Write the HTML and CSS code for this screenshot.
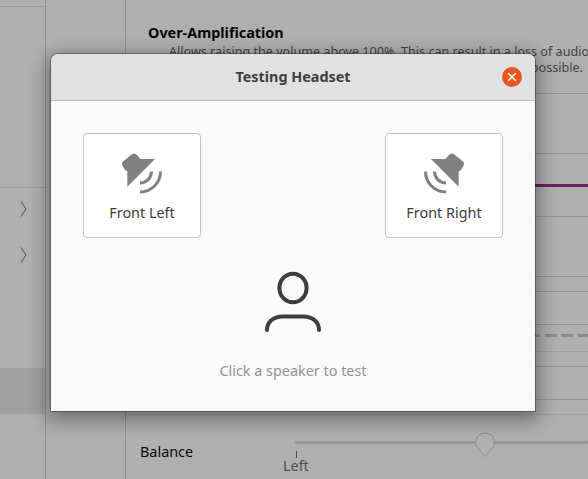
FILE: index.html
```html
<!DOCTYPE html>
<html lang="en">

<head>
    <meta charset="UTF-8" />
    <title>Testing Headset</title>
    <link rel="stylesheet" href="styles.css">
</head>

<body>
    <div class="window">
        <div class="categories">
            <div class="cat-top"></div>
            <div class="cat-chevrons">
                <svg class="chevron" width="7" height="18" viewBox="0 0 7 18"><path d="M1 1.5 L6 9 L1 16.5" /></svg>
                <svg class="chevron" width="7" height="18" viewBox="0 0 7 18"><path d="M1 1.5 L6 9 L1 16.5" /></svg>
            </div>
            <div class="cat-selected"></div>
        </div>
        <div class="nav"></div>
        <div class="content">
            <div class="amplification">
                <div class="amp-title">Over-Amplification</div>
                <div class="amp-text">Allows raising the volume above 100%. This can result in a loss of audio</div>
                <div class="amp-text amp-second">quality; it is better to increase the application volume if possible.</div>
            </div>
            <div class="rows">
                <div class="row"></div>
                <div class="row row-bar"><div class="bar"></div></div>
                <div class="row"></div>
                <div class="row"></div>
                <div class="row"></div>
                <div class="row row-dash light"><div class="dash"></div></div>
                <div class="row"></div>
                <div class="row"></div>
                <div class="row light"></div>
            </div>
            <div class="balance">
                <span class="balance-label">Balance</span>
                <div class="slider">
                    <div class="track"></div>
                    <svg class="thumb" width="22" height="26" viewBox="0 0 22 26">
                        <path d="M11 1 C16.5 1 20.5 5 20.5 10.5 C20.5 14 18.5 16 16.5 18 L11 24.5 L5.5 18 C3.5 16 1.5 14 1.5 10.5 C1.5 5 5.5 1 11 1 Z" />
                    </svg>
                    <div class="tick"></div>
                    <div class="tick-label">Left</div>
                </div>
            </div>
        </div>
    </div>

    <div class="dialog">
        <div class="dialog-header">
            <span></span>
            <span class="dialog-title">Testing Headset</span>
            <button class="close">
                <svg width="10" height="10" viewBox="0 0 10 10"><path d="M1.2 1.2 L8.8 8.8 M8.8 1.2 L1.2 8.8" /></svg>
            </button>
        </div>
        <div class="dialog-body">
            <div class="speakers">
                <div class="speaker">
                    <svg class="speaker-icon" width="44" height="44" viewBox="0 0 44 44">
                        <path class="cone" d="M7.3 34.7 L35 7 L20.5 7 L17 3 Q14.5 0.3 12 2.3 L3 9.5 Q1 11.2 2.3 13.3 L5 18 Q5.6 18.9 7.3 18.9 Z" />
                        <path class="wave" d="M40.5 19.5 A20.5 20.5 0 0 1 20 40 M31.5 19.5 A11.5 11.5 0 0 1 20 31" />
                    </svg>
                    <span>Front Left</span>
                </div>
                <div class="speaker">
                    <svg class="speaker-icon flip" width="44" height="44" viewBox="0 0 44 44">
                        <path class="cone" d="M7.3 34.7 L35 7 L20.5 7 L17 3 Q14.5 0.3 12 2.3 L3 9.5 Q1 11.2 2.3 13.3 L5 18 Q5.6 18.9 7.3 18.9 Z" />
                        <path class="wave" d="M40.5 19.5 A20.5 20.5 0 0 1 20 40 M31.5 19.5 A11.5 11.5 0 0 1 20 31" />
                    </svg>
                    <span>Front Right</span>
                </div>
            </div>
            <svg class="person" width="60" height="64" viewBox="0 0 60 64">
                <ellipse cx="30" cy="18" rx="13.6" ry="14.2" />
                <path d="M4 60 C4 53 9 46.5 20 46.5 H40 C51 46.5 56 53 56 60" />
            </svg>
            <div class="hint">Click a speaker to test</div>
        </div>
    </div>
</body>

</html>
```

FILE: styles.css
```css
body {
    margin: 0;
    width: 588px;
    height: 479px;
    overflow: hidden;
    position: relative;
    background-color: #afafaf;
    font-family: "Noto Sans", sans-serif;
    font-size: 14.4px;
}

.window {
    display: flex;
    height: 479px;
}

/* fenetre grisee derriere le dialogue */
.categories {
    width: 45px;
    flex-shrink: 0;
    border-right: 1px solid #8f8f8f;
}

.cat-top {
    height: 182px;
    box-sizing: border-box;
    margin-top: 6px;
    border-top: 1px solid #9a9a9a;
    border-bottom: 1px solid #9a9a9a;
}

.cat-chevrons {
    height: 180px;
    display: flex;
    flex-direction: column;
    align-items: center;
    gap: 28px;
    padding-top: 12px;
    box-sizing: border-box;
    margin-right: -1px;
}

.chevron {
    fill: none;
    stroke: #4f4f4f;
    stroke-width: 1;
}

.cat-selected {
    height: 46px;
    background-color: #a0a0a0;
}

.nav {
    width: 79px;
    flex-shrink: 0;
    border-right: 1px solid #8f8f8f;
}

.content {
    flex: 1;
    min-width: 0;
}

.amplification {
    height: 94px;
    box-sizing: border-box;
    padding: 24px 5px 0 22px;
    border-bottom: 1px solid #929292;
    white-space: nowrap;
    overflow: hidden;
}

.amp-title {
    font-weight: 700;
    color: #050505;
    line-height: 18px;
    margin-bottom: 2px;
}

.amp-text {
    margin-left: 21px;
    color: #454545;
    font-size: 12.6px;
    line-height: 16px;
}

.amp-second {
    text-align: right;
}

.rows {
    display: grid;
    grid-template-rows: 60px 63px 60px 15px 33px 27px 15px 33px 15px;
}

.row {
    box-sizing: border-box;
    border-bottom: 1px solid #929292;
}

.row.light {
    border-bottom-color: #9f9f9f;
}

.row-bar {
    padding-top: 30px;
}

.bar {
    height: 3px;
    background-color: #6f1f68;
}

.row-dash {
    padding-top: 9px;
}

.dash {
    height: 3px;
    background-image: repeating-linear-gradient(to right, #8a8a8a 0, #8a8a8a 12px, transparent 12px, transparent 16.5px);
    background-position: 419px 0;
}

.balance {
    display: flex;
    align-items: flex-start;
    padding: 26px 0 0 14px;
}

.balance-label {
    width: 155px;
    margin-top: 1px;
    color: #0a0a0a;
    line-height: 20px;
}

.slider {
    flex: 1;
    position: relative;
}

.track {
    height: 3px;
    border-radius: 2px;
    background-color: #949494;
}

.thumb {
    position: absolute;
    left: 179px;
    top: -9px;
    fill: #afafaf;
    stroke: #8c8c8c;
    stroke-width: 1;
}

.tick {
    width: 1px;
    height: 7px;
    margin: 7px 0 0 1px;
    background-color: #4c4c4c;
}

.tick-label {
    position: absolute;
    left: -12px;
    top: 16px;
    color: #4f4f4f;
    line-height: 18px;
}

/* dialogue */
.dialog {
    position: absolute;
    left: 51px;
    top: 54px;
    width: 484px;
    height: 357px;
    background-color: #fafafa;
    border-radius: 7px 7px 0 0;
    box-shadow: 0 0 0 1px rgba(0, 0, 0, 0.3), 0 5px 18px 4px rgba(0, 0, 0, 0.38);
}

.dialog-header {
    height: 47px;
    box-sizing: border-box;
    display: grid;
    grid-template-columns: 1fr auto 1fr;
    align-items: center;
    background-color: #e1e1e1;
    border-bottom: 1px solid #bdbdbd;
    border-radius: 7px 7px 0 0;
}

.dialog-title {
    font-weight: 700;
    color: #3d3d3d;
    margin-top: -2px;
}

.close {
    justify-self: end;
    width: 20px;
    height: 20px;
    margin-right: 13px;
    padding: 0;
    border: none;
    border-radius: 50%;
    background-color: #e95420;
    display: flex;
    align-items: center;
    justify-content: center;
}

.close svg {
    stroke: #fff;
    stroke-width: 1.6;
    fill: none;
}

.dialog-body {
    display: flex;
    flex-direction: column;
    align-items: center;
    padding: 32px 32px 0;
}

.speakers {
    width: 100%;
    display: flex;
    justify-content: space-between;
}

.speaker {
    width: 118px;
    height: 105px;
    box-sizing: border-box;
    display: flex;
    flex-direction: column;
    align-items: center;
    padding-top: 18px;
    background-color: #fff;
    border: 1px solid #c4c4c4;
    border-radius: 4px;
    color: #3d3d3d;
    line-height: 20px;
}

.speaker-icon {
    margin-bottom: 7px;
}

.cone {
    fill: #808080;
}

.wave {
    fill: none;
    stroke: #808080;
    stroke-width: 3;
}

.flip {
    transform: scaleX(-1);
}

.person {
    margin-top: 32px;
    fill: none;
    stroke: #3d3d3d;
    stroke-width: 4;
    stroke-linecap: round;
}

.hint {
    margin-top: 27px;
    color: #929292;
    line-height: 20px;
}
```
